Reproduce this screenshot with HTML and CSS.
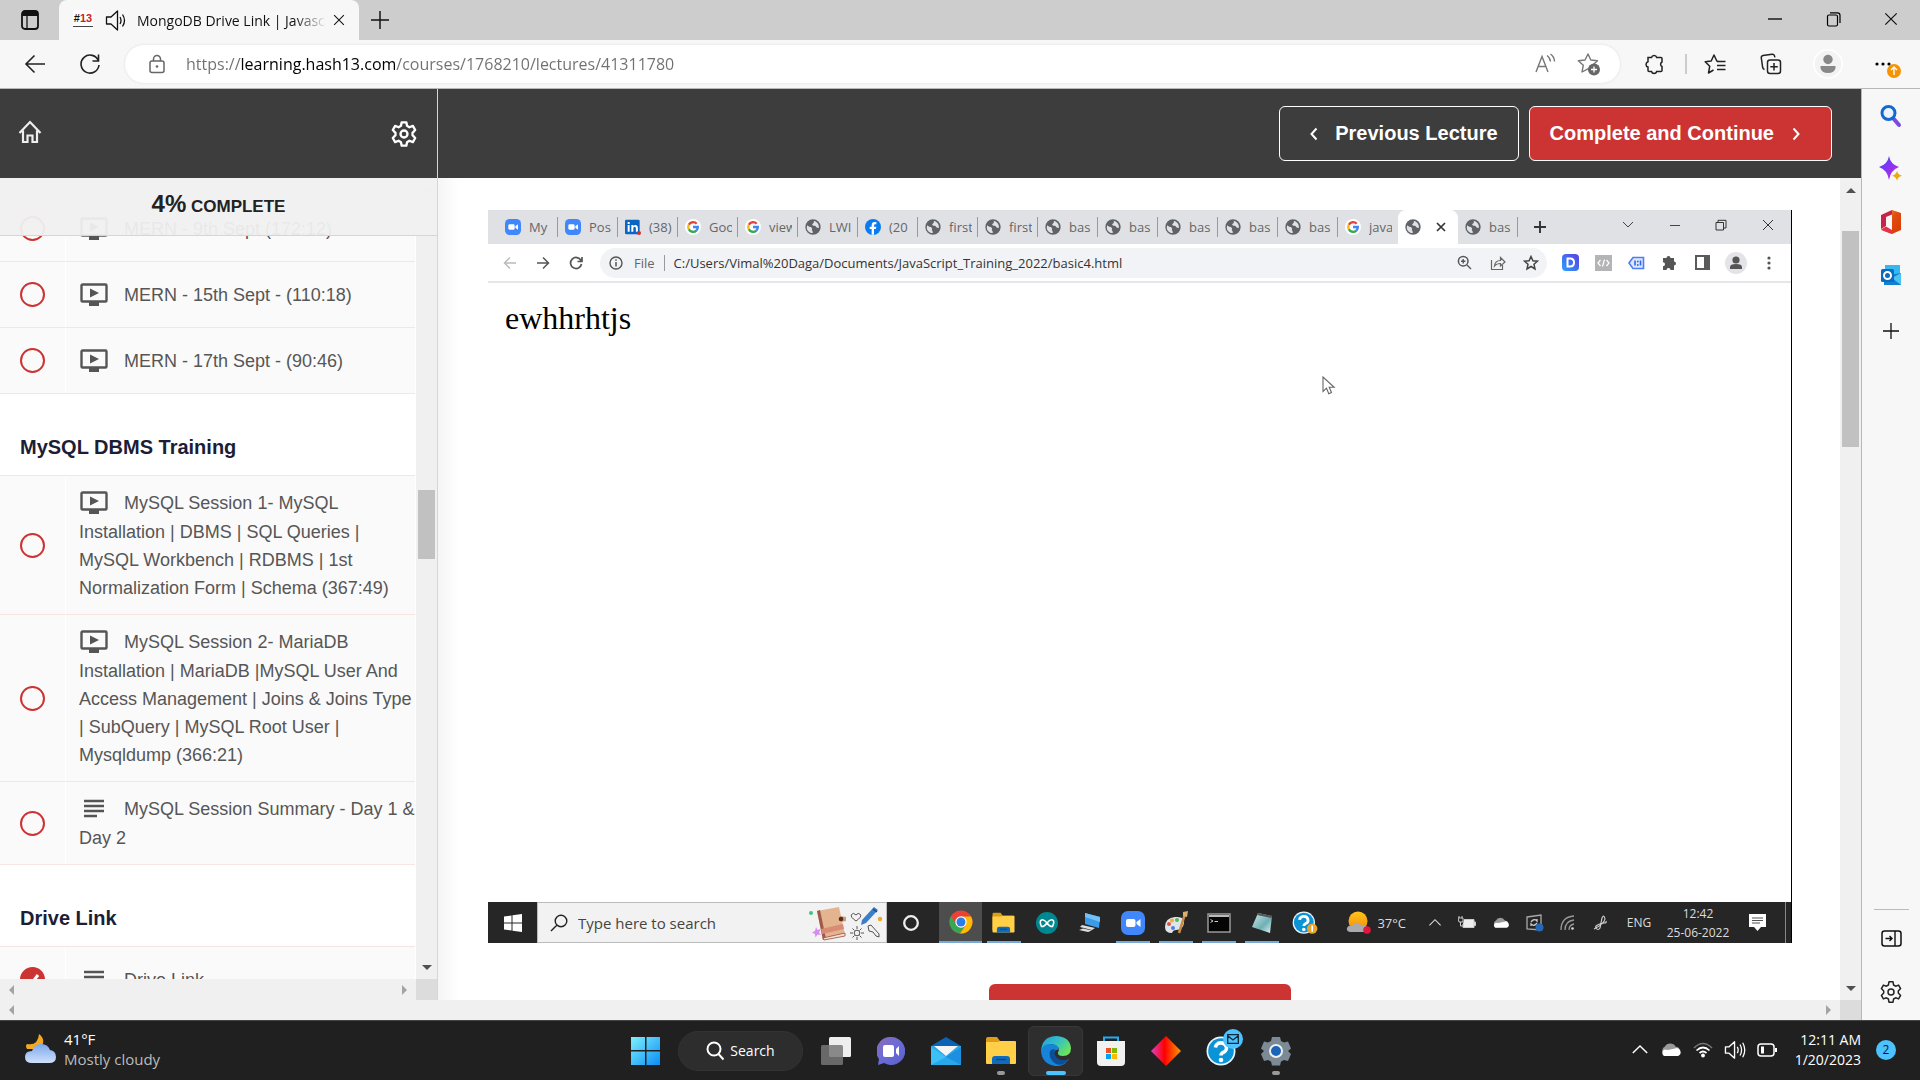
FILE: index.html
```html
<!DOCTYPE html>
<html lang="en">
<head>
<meta charset="utf-8">
<title>MongoDB Drive Link | Javascript</title>
<link rel="stylesheet" href="styles.css">
</head>
<body>
<svg class="defs" width="0" height="0" aria-hidden="true">
  <defs>
    <linearGradient id="g-win" x1="0" y1="0" x2="1" y2="1"><stop offset="0" stop-color="#7ef0ff"/><stop offset="1" stop-color="#0a8df5"/></linearGradient>
    <linearGradient id="g-chat" x1="0" y1="0" x2="1" y2="1"><stop offset="0" stop-color="#8f6bb5"/><stop offset=".5" stop-color="#6a6bd8"/><stop offset="1" stop-color="#5b5fc7"/></linearGradient>
    <linearGradient id="g-edge" x1="0" y1="0" x2="1" y2=".6"><stop offset="0" stop-color="#1f9de0"/><stop offset=".55" stop-color="#35c1c4"/><stop offset="1" stop-color="#6be35a"/></linearGradient>
    <linearGradient id="g-dia" x1="0" x2="1"><stop offset="0" stop-color="#e040c8"/><stop offset=".45" stop-color="#f00"/><stop offset="1" stop-color="#ff9a00"/></linearGradient>
    <linearGradient id="g-star" x1="0" y1="0" x2="1" y2="1"><stop offset="0" stop-color="#3d4cf5"/><stop offset=".6" stop-color="#9a2ff0"/><stop offset="1" stop-color="#c44bf5"/></linearGradient>
    <linearGradient id="g-off" x1="0" y1="0" x2="1" y2="1"><stop offset="0" stop-color="#f2a00f"/><stop offset=".5" stop-color="#e04a10"/><stop offset="1" stop-color="#d83b01"/></linearGradient>
    <linearGradient id="g-sun" x1="0" y1="0" x2="0" y2="1"><stop offset="0" stop-color="#ffc61a"/><stop offset="1" stop-color="#f58a07"/></linearGradient>
    <linearGradient id="g-cloud" x1="0" y1="0" x2="0" y2="1"><stop offset="0" stop-color="#7ba7ec"/><stop offset="1" stop-color="#cfe0fa"/></linearGradient>
    <linearGradient id="g-d" x1="0" y1="1" x2="1" y2="0"><stop offset="0" stop-color="#2aa0ff"/><stop offset="1" stop-color="#5a3de0"/></linearGradient>
    <linearGradient id="g-note" x1="0" y1="0" x2="1" y2="1"><stop offset="0" stop-color="#cfe9ea"/><stop offset=".6" stop-color="#6fb0b5"/><stop offset="1" stop-color="#e6f4f4"/></linearGradient>
  </defs>
  <symbol id="zoomcam" viewBox="0 0 24 24"><rect width="24" height="24" rx="7" fill="#4087fc"/><rect x="5" y="8" width="9.500" height="8" rx="2" fill="#fff"/><path d="M15.500 11l4-3v8l-4-3z" fill="#fff"/></symbol>
  <symbol id="google" viewBox="0 0 24 24"><circle cx="12" cy="12" r="12" fill="#fff"/><g fill="none" stroke-width="3.600"><path d="M17.500 7.200A7.200 7.200 0 0 0 5.700 8.600" stroke="#ea4335"/><path d="M5.700 8.600a7.200 7.200 0 0 0 0 6.800" stroke="#fbbc05"/><path d="M5.700 15.400a7.200 7.200 0 0 0 11.300 2" stroke="#34a853"/><path d="M17 17.400a7.200 7.200 0 0 0 2.200-5.300H12" stroke="#4285f4"/></g></symbol>
  <symbol id="globe" viewBox="0 0 24 24"><circle cx="12" cy="12" r="11.500" fill="#5f6368"/><path d="M3.500 9.500c2 3 4.500 1.500 6.500 3.500s-1 3 1 4.500c1 1 0 2.500 1 3.500-4.500.5-9-3-9.300-8 .1-1.300.3-2.500.8-3.500zM13.500 3c-1 1.500.5 2-1 3.500S10 8 11.500 9.500s3 0 4.500 1.500 1 2.500 4.800 2.500C21.500 8.500 18.500 4 13.500 3z" fill="#dfe1e5"/></symbol>
  <symbol id="tv" viewBox="0 0 28 24"><path d="M2.500 1.500h23a1 1 0 0 1 1 1v15a1 1 0 0 1-1 1h-23a1 1 0 0 1-1-1v-15a1 1 0 0 1 1-1z" fill="none" stroke="#555" stroke-width="2.400"/><path d="M9 19h10v4H9z" fill="#555"/><path d="M10 5.500v9l9-4.500z" fill="#555"/></symbol>
  <symbol id="lines" viewBox="0 0 28 24"><path d="M4 4h20M4 9h20M4 14h20M4 19h13" stroke="#555" stroke-width="2.400"/></symbol>
  <symbol id="gear" viewBox="0 0 24 24"><path d="M10 2h4l.6 3 2 1.200 3-1.100 2 3.500L19.300 11v2l2.300 2.400-2 3.500-3-1.100-2 1.200-.6 3h-4l-.6-3-2-1.200-3 1.100-2-3.500L4.700 13v-2L2.400 8.600l2-3.500 3 1.100 2-1.200z" fill="none" stroke="currentColor" stroke-width="2" stroke-linejoin="round"/><circle cx="12" cy="12" r="3" fill="none" stroke="currentColor" stroke-width="2"/></symbol>
  <symbol id="gearthin" viewBox="0 0 24 24"><path d="M10 1.800h4l.6 3.200 2 1.200 3-1.100 2 3.500L19.300 11v2l2.300 2.400-2 3.500-3-1.100-2 1.200-.6 3.200h-4L9.400 19l-2-1.200-3 1.100-2-3.500L4.700 13v-2L2.400 8.600l2-3.500 3 1.100 2-1.200z" fill="none" stroke="#222" stroke-width="1.500" stroke-linejoin="round"/><circle cx="12" cy="12" r="3" fill="none" stroke="#222" stroke-width="1.500"/></symbol>
  <symbol id="folder" viewBox="0 0 30 30"><path d="M0 3q0-2 2-2h9l3 4h15v20H0z" fill="#e09c12"/><path d="M0 6h12l2-1h15q1 0 1 1v21q0 1-1 1H1q-1 0-1-1z" fill="#ffcf48"/><path d="M6 28v-5q0-3 3-3h12q3 0 3 3v5z" fill="#0f6cbd"/><path d="M10 23.500h10" stroke="#0a4a86" stroke-width="1.500"/></symbol>
  <symbol id="cloud" viewBox="0 0 28 20"><path d="M7 17a6 6 0 0 1-1-11A8 8 0 0 1 20 6a5.500 5.500 0 0 1 3 10z" fill="#9a9a9a"/><path d="M5 17.500a4.500 4.500 0 0 1 1-8l4 .5 9-2a5 5 0 0 1 4 9.500z" fill="#fff"/></symbol>
  <symbol id="help" viewBox="0 0 30 30"><circle cx="15" cy="15" r="14.500" fill="#eaf6fd"/><circle cx="15" cy="15" r="12.800" fill="#0a93d6"/><path d="M9.500 11.500a5.500 5 0 1 1 7.500 5q-2 1-2 3" fill="none" stroke="#fff" stroke-width="3.600"/><circle cx="15" cy="24" r="2.300" fill="#fff"/></symbol>
  <symbol id="chev" viewBox="0 0 20 12"><path d="M2 10l8-8 8 8" fill="none" stroke="currentColor" stroke-width="1.600"/></symbol>
  <symbol id="x" viewBox="0 0 16 16"><path d="M1.500 1.500l13 13M14.500 1.500l-13 13" stroke="currentColor" stroke-width="1.400"/></symbol>
  <symbol id="plus" viewBox="0 0 16 16"><path d="M8 0v16M0 8h16" stroke="currentColor" stroke-width="1.300"/></symbol>
  <symbol id="speaker" viewBox="0 0 24 22"><path d="M1.500 7.500h4l6-5.500v18l-6-5.500h-4z" fill="none" stroke="currentColor" stroke-width="1.500" stroke-linejoin="round"/><path d="M14.500 7.500q2 3.500 0 7M17.500 5q3.500 6 0 12M20.500 3q4.500 8 0 16" fill="none" stroke="currentColor" stroke-width="1.400"/></symbol>
</svg>

<header class="tabstrip">
  <button class="slot w58" aria-label="Tab actions"><svg width="20" height="20" viewBox="0 0 20 20"><rect x="2" y="1" width="16" height="18" rx="3" fill="none" stroke="#111" stroke-width="1.800"/><path d="M2 4q0-3 3-3h10q3 0 3 3v2H2z" fill="#111"/><path d="M7 6v13" stroke="#111" stroke-width="1.300"/></svg></button>
  <div class="browser-tab">
    <span class="favicon">#<b>13</b><i></i></span>
    <svg class="audio" width="21" height="21" viewBox="0 0 21 21"><path d="M1.500 7h4.500l6.500-6v19L6 14H1.500z" fill="none" stroke="#111" stroke-width="1.300" stroke-linejoin="round"/><path d="M15 7q2 3.500 0 7M17.500 4.500q4 6 0 12" fill="none" stroke="#111" stroke-width="1.300"/></svg>
    <span class="tab-title">MongoDB Drive Link | Javasc</span>
    <button aria-label="Close tab"><svg width="12" height="12"><use href="#x"/></svg></button>
  </div>
  <button class="slot w42" aria-label="New tab"><svg width="18" height="18"><use href="#plus"/></svg></button>
  <div class="window-buttons">
    <button class="slot w58" aria-label="Minimize"><svg width="14" height="14"><path d="M0 7h14" stroke="#000" stroke-width="1.300"/></svg></button>
    <button class="slot w58" aria-label="Restore"><svg width="15" height="15"><path d="M1.500 4.500q0-1.500 1.500-1.500h7q1.500 0 1.500 1.500v8q0 1.500-1.500 1.500H3q-1.500 0-1.500-1.500zM4 .8h7.500q2.500 0 2.500 2.500V11" fill="none" stroke="#000" stroke-width="1.200"/></svg></button>
    <button class="slot w58" aria-label="Close"><svg width="14" height="14"><use href="#x"/></svg></button>
  </div>
</header>

<nav class="toolbar">
  <button class="slot w54" aria-label="Back"><svg width="22" height="20"><path d="M21 10H2M10.500 1.500L2 10l8.500 8.500" fill="none" stroke="#222" stroke-width="1.600"/></svg></button>
  <button class="slot w56" aria-label="Refresh"><svg width="22" height="22"><path d="M19.500 8A9 9 0 1 0 20 12M19.500 1.500V8H13.500" fill="none" stroke="#222" stroke-width="1.600"/></svg></button>
  <div class="address">
    <svg width="18" height="20"><rect x="2" y="7" width="14" height="11.500" rx="2" fill="none" stroke="#666" stroke-width="1.500"/><path d="M5.500 7V5a3.500 3.500 0 0 1 7 0v2" fill="none" stroke="#666" stroke-width="1.500"/><circle cx="9" cy="12.500" r="1.300" fill="#666"/></svg>
    <input type="text" aria-label="Address" value="https://learning.hash13.com/courses/1768210/lectures/41311780">
    <button class="slot w44" aria-label="Read aloud"><svg width="22" height="22"><path d="M2 19L8 3.500 14 19M4 13.500h8M13 2.500q3 2 3.500 6M16.500 1q4 3 4 7.500" fill="none" stroke="#777" stroke-width="1.400"/></svg></button>
    <button class="slot w44" aria-label="Add to favorites"><svg width="24" height="24"><path d="M11 2l2.800 6 6.700.8-5 4.500L16.700 20 11 16.800 5 20l1.300-6.700-5-4.500L8 8z" fill="none" stroke="#777" stroke-width="1.400" stroke-linejoin="round"/><circle cx="17" cy="17.500" r="6" fill="#666"/><path d="M17 14.500v6M14 17.500h6" stroke="#fff" stroke-width="1.300"/></svg></button>
  </div>
  <button class="slot w58 extensions" aria-label="Extensions"><svg width="22" height="22" viewBox="0 0 22 22"><path d="M5 4.500h3.500a2.700 2.700 0 0 1 5.200 0h4.300q1 0 1 1V9a2.500 2.500 0 0 0 0 4.500v4q0 1-1 1h-4.300a2.700 2.700 0 0 1-5.200 0H6q-1 0-1-1v-3.500a2.700 2.700 0 0 1 0-5.200z" fill="none" stroke="#222" stroke-width="1.500"/></svg></button>
  <span class="tool-sep"></span>
  <button class="slot w56" aria-label="Favorites"><svg width="22" height="22"><path d="M14.500 8.500L12.800 8 10 2 7.200 8l-6 .8 4.500 4.500L4.500 20l5-3M13 8.500h8.500M13 12.500h8.500M13 16.500h8.500" fill="none" stroke="#222" stroke-width="1.500" stroke-linejoin="round"/></svg></button>
  <button class="slot w56" aria-label="Collections"><svg width="22" height="22"><rect x="7.500" y="7" width="13" height="13.500" rx="2.500" fill="none" stroke="#222" stroke-width="1.500"/><path d="M14 10v7.500M10.300 13.800h7.500M4.500 16.500Q3 16 2.700 14.500L1.300 5q-.3-2 1.700-2.500L12 1.200q2-.2 2.500 1.700l.4 1.500" fill="none" stroke="#222" stroke-width="1.500"/></svg></button>
  <button class="slot w58" aria-label="Profile"><svg width="30" height="30"><circle cx="15" cy="15" r="14" fill="#f3f3f3" stroke="#fff" stroke-width="1.500"/><circle cx="15" cy="10.500" r="4.700" fill="#888"/><path d="M7.500 17h15v2q-1 5-7.500 5t-7.500-5z" fill="#888"/></svg></button>
  <button class="slot w58" aria-label="Settings and more"><svg width="30" height="30"><circle cx="6" cy="15" r="1.600"/><circle cx="12" cy="15" r="1.600"/><circle cx="18" cy="15" r="1.600"/><circle cx="23" cy="22" r="7" fill="#f59300"/><path d="M23 26v-8M20 21l3-3 3 3" fill="none" stroke="#fff" stroke-width="1.400"/></svg></button>
</nav>

<div class="middle">
  <div class="page">
    <header class="course-bar">
      <div class="course-bar-left">
        <a href="#home" aria-label="Home"><svg width="26" height="26"><path d="M2.500 14L13 3l10.500 11M6 11.500V23h4.500v-6.500h5V23H20V11.500" fill="none" stroke="#eee" stroke-width="2.200"/></svg></a>
        <button aria-label="Settings"><svg width="28" height="28"><use href="#gear"/></svg></button>
      </div>
      <div class="course-nav">
        <button class="btn prev"><svg width="8" height="14"><path d="M6.500 1.500L1.500 7l5 5.500" fill="none" stroke="#fff" stroke-width="2"/></svg>Previous Lecture</button>
        <button class="btn next">Complete and Continue<svg width="8" height="14"><path d="M1.500 1.500l5 5.500-5 5.500" fill="none" stroke="#fff" stroke-width="2"/></svg></button>
      </div>
    </header>

    <div class="cols">
      <aside class="sidebar">
        <div class="progress"><b>4%</b> COMPLETE</div>
        <div class="sidebar-scroll">
          <div class="lectures">
            <a class="row" href="#l1"><span class="mark"><i></i></span><span class="label"><svg><use href="#tv"/></svg>MERN - 9th Sept (172:12)</span></a>
            <a class="row" href="#l2"><span class="mark"><i></i></span><span class="label"><svg><use href="#tv"/></svg>MERN - 15th Sept - (110:18)</span></a>
            <a class="row" href="#l3"><span class="mark"><i></i></span><span class="label"><svg><use href="#tv"/></svg>MERN - 17th Sept - (90:46)</span></a>
            <h2>MySQL DBMS Training</h2>
            <a class="row" href="#l4"><span class="mark"><i></i></span><span class="label"><svg><use href="#tv"/></svg>MySQL Session 1- MySQL<br>Installation | DBMS | SQL Queries |<br>MySQL Workbench | RDBMS | 1st<br>Normalization Form | Schema (367:49)</span></a>
            <a class="row" href="#l5"><span class="mark"><i></i></span><span class="label"><svg><use href="#tv"/></svg>MySQL Session 2- MariaDB<br>Installation | MariaDB |MySQL User And<br>Access Management | Joins &amp; Joins Type<br>| SubQuery | MySQL Root User |<br>Mysqldump (366:21)</span></a>
            <a class="row" href="#l6"><span class="mark"><i></i></span><span class="label"><svg><use href="#lines"/></svg>MySQL Session Summary - Day 1 &amp;<br>Day 2</span></a>
            <h2>Drive Link</h2>
            <a class="row" href="#l7"><span class="mark"><i class="done"><svg width="25" height="25"><path d="M7 13l4 4 7-9" fill="none" stroke="#fff" stroke-width="3"/></svg></i></span><span class="label"><svg><use href="#lines"/></svg>Drive Link</span></a>
          </div>
          <div class="vbar side"><span class="arrow up pale"></span><span class="thumb"></span><span class="arrow down"></span></div>
        </div>
        <div class="hbar"><div class="track"><span class="arrow left"></span><span class="arrow right"></span></div><span class="corner"></span></div>
      </aside>

      <main class="content">
        <section class="video" aria-label="Lecture video">
          <div class="v-tabs">
            <span class="v-tab"><svg><use href="#zoomcam"/></svg><em>My</em></span>
            <span class="v-tab"><svg><use href="#zoomcam"/></svg><em>Pos</em></span>
            <span class="v-tab"><svg viewBox="0 0 24 24"><rect y="1" width="22" height="22" rx="2" fill="#0a66c2"/><path d="M4 9h3v10H4zM4 4.500h3v3H4zM9.500 9h3v1.500q3-3 6 0 .8 1 .8 3V19h-3v-5q0-2.500-1.800-2.500-2 0-2 2.500v5h-3z" fill="#fff"/><circle cx="21" cy="21" r="3" fill="#e02b2b"/></svg><em>(38)</em></span>
            <span class="v-tab"><svg><use href="#google"/></svg><em>Goo</em></span>
            <span class="v-tab"><svg><use href="#google"/></svg><em>view</em></span>
            <span class="v-tab"><svg><use href="#globe"/></svg><em>LWI</em></span>
            <span class="v-tab"><svg viewBox="0 0 24 24"><circle cx="12" cy="12" r="12" fill="#0b7bf0"/><path d="M10 23.500V15H7v-3.500h3V9q0-4.500 4.500-4.500H17V8h-1.500q-2 0-2 1.800v1.700H17l-.6 3.500h-2.900v8.500z" fill="#fff"/></svg><em>(20</em></span>
            <span class="v-tab"><svg><use href="#globe"/></svg><em>first</em></span>
            <span class="v-tab"><svg><use href="#globe"/></svg><em>first</em></span>
            <span class="v-tab"><svg><use href="#globe"/></svg><em>bas</em></span>
            <span class="v-tab"><svg><use href="#globe"/></svg><em>bas</em></span>
            <span class="v-tab"><svg><use href="#globe"/></svg><em>bas</em></span>
            <span class="v-tab"><svg><use href="#globe"/></svg><em>bas</em></span>
            <span class="v-tab"><svg><use href="#globe"/></svg><em>bas</em></span>
            <span class="v-tab last"><svg><use href="#google"/></svg><em>java</em></span>
            <span class="v-tab active"><svg><use href="#globe"/></svg><svg class="close" viewBox="0 0 10 10"><path d="M1 1l8 8M9 1L1 9" stroke="#333" stroke-width="1.700"/></svg></span>
            <span class="v-tab"><svg><use href="#globe"/></svg><em>bas</em></span>
            <span class="slot w44"><svg width="12" height="12" viewBox="0 0 12 12"><path d="M6 0v12M0 6h12" stroke="#333" stroke-width="1.900"/></svg></span>
            <span class="v-window">
              <svg width="12" height="12"><path d="M1 3l5 5 5-5" fill="none" stroke="#444"/></svg>
              <svg width="12" height="12"><path d="M1 6.500h10" stroke="#444"/></svg>
              <svg width="12" height="12"><path d="M1 3.500h7.500v7.500H1zM3 3.500V1.300h8V9H8.500" fill="none" stroke="#333"/></svg>
              <svg width="12" height="12"><path d="M1 1l10 10M11 1L1 11" stroke="#333"/></svg>
            </span>
          </div>
          <div class="v-toolbar">
            <span class="slot w33"><svg width="14" height="14"><path d="M13 7H2M7 1.500L1.500 7 7 12.500" fill="none" stroke="#bbb" stroke-width="1.500"/></svg></span>
            <span class="slot w33"><svg width="14" height="14"><path d="M1 7h11M7 1.500L12.500 7 7 12.500" fill="none" stroke="#555" stroke-width="1.500"/></svg></span>
            <span class="slot w33"><svg width="14" height="14"><path d="M12 4.500A5.500 5.500 0 1 0 12.500 8M13 1v4.500H8.500" fill="none" stroke="#555" stroke-width="1.700"/></svg></span>
            <div class="v-omnibox">
              <svg width="14" height="14"><circle cx="7" cy="7" r="6" fill="none" stroke="#555" stroke-width="1.400"/><path d="M7 6v4.500M7 3.300v1.500" stroke="#555" stroke-width="1.500"/></svg>
              <span class="v-file">File</span>
              <span class="v-url">C:/Users/Vimal%20Daga/Documents/JavaScript_Training_2022/basic4.html</span>
              <span class="slot w33"><svg width="15" height="15"><circle cx="6.200" cy="6.200" r="4.800" fill="none" stroke="#555" stroke-width="1.500"/><path d="M10 10l4 4M4 6.200h4.400M6.200 4v4.400" stroke="#555" stroke-width="1.400"/></svg></span>
              <span class="slot w33"><svg width="16" height="16"><path d="M1.500 5v9.500h11V10M4.500 11q.5-5.500 6-5.500V2.500L15 7l-4.500 4V8.500q-4 0-6 2.500z" fill="none" stroke="#666" stroke-width="1.200"/></svg></span>
              <span class="slot w33"><svg width="16" height="16"><path d="M8 1.500l1.900 4.300 4.600.4-3.500 3.100 1 4.700-4-2.500L4 14l1-4.700-3.500-3.100 4.600-.4z" fill="none" stroke="#444" stroke-width="1.500"/></svg></span>
            </div>
            <span class="slot w33"><svg width="17" height="17" viewBox="0 0 17 17"><rect width="17" height="17" rx="4" fill="url(#g-d)"/><path d="M5.500 4.500H8q4 0 4 4t-4 4H5.500z" fill="none" stroke="#fff" stroke-width="2"/></svg></span>
            <span class="slot w33"><svg width="17" height="17"><rect y="1" width="17" height="16" fill="#b4b4b6"/><path d="M5.500 6L3 9l2.500 3M11.500 6L14 9l-2.500 3M9.500 5.500l-2 7" fill="none" stroke="#fff" stroke-width="1.200"/></svg></span>
            <span class="slot w33"><svg width="17" height="14"><path d="M1 7l4-5.500h10.500v11H5z" fill="#dfe8fd" stroke="#4b7df5" stroke-width="1.600"/><path d="M7 4.500v5M12.500 4.500v5" stroke="#2f66ee" stroke-width="1.600"/><circle cx="9.800" cy="5.500" r=".9" fill="#2f66ee"/><circle cx="9.800" cy="9" r=".9" fill="#2f66ee"/></svg></span>
            <span class="slot w33"><svg width="15" height="15" viewBox="0 0 15 15"><path d="M1 3h3.500a2 2 0 1 1 4 0H12v3.500a2 2 0 1 1 0 4V15H8.500a2 2 0 0 0-4 0H1v-3.800a2 2 0 0 0 0-4z" fill="#555"/></svg></span>
            <span class="slot w33"><svg width="15" height="15"><rect x="1" y="1" width="13" height="13" fill="#fff" stroke="#5a5a5a" stroke-width="2"/><path d="M9 1h5v13H9z" fill="#5a5a5a"/></svg></span>
            <span class="slot w33"><svg width="22" height="22"><circle cx="11" cy="11" r="11" fill="#e3e3e8"/><circle cx="11" cy="8" r="3.600" fill="#555"/><path d="M5 17v-2q0-3 6-3t6 3v2z" fill="#555"/></svg></span>
            <span class="slot w33"><svg width="4" height="14" fill="#555"><circle cx="2" cy="2" r="1.600"/><circle cx="2" cy="7" r="1.600"/><circle cx="2" cy="12" r="1.600"/></svg></span>
          </div>
          <div class="v-page"><p>ewhhrhtjs</p>
            <svg class="cursor" width="14" height="20"><path d="M1 1v14.500l3.500-3.300 2.300 5.500 2.700-1.200-2.300-5.200h5z" fill="#fff" stroke="#666" stroke-width="1.100"/></svg>
          </div>
          <div class="v-taskbar">
            <span class="slot w49"><svg width="18" height="18" fill="#fff"><path d="M0 2.500l7.500-1v7H0zM8.500 1.300L18 0v8.500H8.500zM0 9.500h7.500v7l-7.500-1zM8.500 9.500H18V18l-9.500-1.300z"/></svg></span>
            <label class="v-search">
              <svg width="18" height="18"><circle cx="11" cy="7" r="5.800" fill="none" stroke="#222" stroke-width="1.400"/><path d="M6.800 11.200L1 17" stroke="#222" stroke-width="1.400"/></svg>
              <input type="text" placeholder="Type here to search" aria-label="Type here to search">
              <svg width="76" height="36" viewBox="0 0 76 36"><path d="M10 6l22-4 6 28-22 5z" fill="#e3b48f"/><path d="M10 6l3-1 6 29-3 1z" fill="#a05a48"/><path d="M14 24l22-5 1 5-22 5z" fill="#d98b74"/><path d="M16 33l22-5v3l-21 4z" fill="#f6e4d8" stroke="#9c4a3c" stroke-width=".8"/><path d="M33 11l6 1v4l-5 1z" fill="#d09a78"/><circle cx="34" cy="14" r="2.300" fill="#5a2f20"/><circle cx="4" cy="8" r="2" fill="#3fc386"/><path d="M9 22l1.500 3 3.500-1-2 3.500 2 2.500-3.500-.5-2 3-.5-3.500-3-1.500 3-1.500z" fill="#d98af0"/><path d="M49 16q-6-4-4.500-6.500 2-2.500 4.500.5 2-3 4.500-.5Q55 12 49 16z" fill="none" stroke="#555" stroke-width="1"/><path d="M55 15L67 2l4 3-12 13-5 2z" fill="#3b7fc9"/><path d="M66 4l4 3" stroke="#184a86" stroke-width="1.500"/><circle cx="73" cy="14" r="2.200" fill="#f5a623"/><g stroke="#555" fill="none"><circle cx="50" cy="28" r="2.800"/><path d="M50 21v3M50 32v3M43 28h3M54 28h3M45.500 23.500l2 2M54.500 32.500l-2-2M54.500 23.500l-2 2M45.500 32.500l2-2"/><path d="M61 21l3-1 8 9v3l-3-1-3-4-4-1z"/></g></svg>
            </label>
            <span class="slot w48"><svg width="18" height="18"><circle cx="9" cy="9" r="6.800" fill="none" stroke="#eee" stroke-width="2.300"/></svg></span>
            <span class="v-app current run"><svg width="24" height="24" viewBox="0 0 24 24"><circle cx="12" cy="12" r="11.500" fill="#ea4335"/><path d="M2 6.300A11.500 11.500 0 0 0 11 23.500L16 15l-8.500 0z" fill="#34a853"/><path d="M22 6.500H12l5 8-6 9A11.500 11.500 0 0 0 22 6.500z" fill="#fbbc05"/><circle cx="12" cy="12" r="5.700" fill="#fff"/><circle cx="12" cy="12" r="4.500" fill="#2b7de9"/></svg></span>
            <span class="v-app run"><svg width="23" height="22"><use href="#folder"/></svg></span>
            <span class="v-app"><svg width="22" height="22"><circle cx="11" cy="11" r="11" fill="#00878f"/><path d="M11 11q-3-4-5.500-3t0 6.500Q8 15 11 11t5.500-3 0 6.500Q14 15 11 11z" fill="none" stroke="#fff" stroke-width="1.600"/></svg></span>
            <span class="v-app"><svg width="24" height="22"><path d="M7 1l15 4-1 11L7 12z" fill="#3c9be8"/><path d="M7 1l15 4v5L7 5z" fill="#72c0f7"/><path d="M4 13l13 3-3 2-12-3zM1 18l9 2 4-1.500-9-2z" fill="#ddd"/></svg></span>
            <span class="v-app run"><svg width="24" height="24"><use href="#zoomcam"/></svg></span>
            <span class="v-app run"><svg width="25" height="24"><path d="M12 6q10-1 9 6t-8 7q-3 0-4 3-7 0-7-6 0-9 10-10z" fill="#dfe5ec"/><circle cx="6" cy="13" r="2" fill="#e0524a"/><circle cx="9" cy="9.500" r="2" fill="#eeb32f"/><circle cx="14" cy="9" r="2" fill="#58b65a"/><circle cx="10" cy="17" r="2" fill="#4a86d8"/><path d="M22 3L16 22" stroke="#c98a45" stroke-width="2.500"/><path d="M20 1l5-1-1 6-4-1z" fill="#d8b070"/></svg></span>
            <span class="v-app run"><svg width="24" height="20"><rect x="1" y="1" width="22" height="18" fill="#050505" stroke="#999" stroke-width="1.500"/><path d="M2 2h20v2H2z" fill="#bbb"/><path d="M3.500 6.500L6 8l-2.500 1.500M7.500 8.500H11" stroke="#ccc" fill="none"/></svg></span>
            <span class="v-app run"><svg width="22" height="22"><path d="M7 1l14 3-2 17L1 15z" fill="url(#g-note)"/><path d="M7 1l14 3-.5 2L6 3z" fill="#555"/></svg></span>
            <span class="v-app"><svg width="26" height="24" viewBox="0 0 32 30"><use href="#help" width="29" height="29"/><circle cx="25" cy="22" r="6.500" fill="#e8a52c"/><path d="M25 18v8" stroke="#fff" stroke-width="2"/></svg></span>
            <span class="v-weather"><svg width="26" height="24"><circle cx="13" cy="10" r="9.500" fill="url(#g-sun)"/><path d="M5 21q-4-1-3-4t5-2q4-6 9-1 6-1 6 4 0 3-3 3z" fill="#aaa9ad"/><circle cx="22" cy="19" r="3.800" fill="#e3173e"/></svg>37°C</span>
            <span class="v-tray">
              <svg width="14" height="9"><use href="#chev"/></svg>
              <svg width="18" height="14"><path d="M6 3.500h10v8H5V8M16 6h1.500v3.500H16" fill="#eee" stroke="#ccc"/><path d="M0 2h5v4H1zM1 0v2M4 0v2M2.500 6v4h3" fill="none" stroke="#ccc"/></svg>
              <svg width="18" height="14"><use href="#cloud"/></svg>
              <svg width="18" height="18"><path d="M1 3l14-2v15L1 15z" fill="none" stroke="#aaa" stroke-width="1.300"/><path d="M5 8q3-4 6-1V5M11 9q-3 4-6 1v2" fill="none" stroke="#ccc" stroke-width="1.300"/><circle cx="13.500" cy="13.500" r="4" fill="#2468b8"/></svg>
              <svg width="16" height="16"><path d="M1 15Q1 2 14 1M5 15q0-9 9-10M9 15q0-5 5-6" fill="none" stroke="#999" stroke-width="1.300"/><circle cx="12.500" cy="13.500" r="1.300" fill="#ddd"/></svg>
              <svg width="16" height="16"><path d="M2 14Q12 9 13 4q-1-5-3-1L8 13q-2 3-4 0t8-5q3 0 2-2" fill="none" stroke="#ccc" stroke-width="1.200"/></svg>
            </span>
            <span class="v-lang">ENG</span>
            <span class="v-clock">12:42<br>25-06-2022</span>
            <span class="slot w48"><svg width="18" height="18"><path d="M0 0h17v13h-5l-3.500 4L5 13H0z" fill="#fff"/><path d="M3 4h11M3 6.500h11M3 9h8" stroke="#555" stroke-width="1.200"/></svg></span>
            <span class="v-desk"></span>
          </div>
        </section>
        <button class="big-button" aria-label="Complete and continue to next lecture"></button>
      </main>
      <div class="vbar page-scroll"><span class="arrow up"></span><span class="thumb"></span><span class="arrow down"></span></div>
    </div>
    <div class="hbar"><div class="track"><span class="arrow left"></span><span class="arrow right"></span></div><span class="corner"></span></div>
  </div>

  <aside class="edge-bar">
    <button aria-label="Search"><svg width="24" height="24"><path d="M14 14l6 7" stroke="#7a4bdc" stroke-width="4" stroke-linecap="round"/><circle cx="9.500" cy="9" r="6.500" fill="#eaf4ff" stroke="#1469cf" stroke-width="3"/></svg></button>
    <button aria-label="Discover"><svg width="24" height="26"><path d="M10 0q1.500 8.500 10 11Q11.500 14 10 24 8.500 14 0 11 8.500 8.500 10 0z" fill="url(#g-star)"/><path d="M18 15q.8 3.500 5 4.700-4.200 1-5 5-.8-4-5-5 4.200-1.200 5-4.700z" fill="#e8ab14"/></svg></button>
    <button aria-label="Office"><svg width="22" height="26"><path d="M12 1l9 3v17l-9 4-11-4 11 .5V5.500z" fill="url(#g-off)"/><path d="M1 6l11-5v4.500L6 8v9l-5 3z" fill="#c8244a"/><path d="M1 20.500l5-3 6 3.500v4z" fill="#e8304c"/></svg></button>
    <button aria-label="Outlook"><svg width="22" height="22"><rect x="5" y="1" width="15" height="12" fill="#35b8f1"/><path d="M4 12l17-3v12H4z" fill="#1180d0"/><path d="M12 14l9-5v12z" fill="#4ac4f5"/><rect x="1" y="5" width="13" height="13" rx="1.500" fill="#0a6cc0"/><circle cx="7.500" cy="11.500" r="3.500" fill="none" stroke="#fff" stroke-width="2"/></svg></button>
    <button class="add" aria-label="Customize"><svg width="16" height="16"><use href="#plus"/></svg></button>
    <hr>
    <button aria-label="Hide sidebar"><svg width="21" height="17"><rect x="1" y="1" width="19" height="15" rx="2.500" fill="none" stroke="#111" stroke-width="1.500"/><path d="M14 1v15M4.500 8.500H11M8.500 6L11 8.500 8.500 11" fill="none" stroke="#111" stroke-width="1.400"/></svg></button>
    <button aria-label="Sidebar settings"><svg width="24" height="24"><use href="#gearthin"/></svg></button>
  </aside>
</div>

<footer class="taskbar">
  <div class="weather">
    <svg width="32" height="32"><path d="M15 1q8 6 1 15H3q-2-3 0-5 11 2 12-10z" fill="#f2a91d"/><path d="M8 30q-7 0-7-6t7-6q2-7 9-7t9 6q6 1 6 7t-7 6z" fill="url(#g-cloud)"/></svg>
    <p>41°F<br><span>Mostly cloudy</span></p>
  </div>
  <div class="apps">
    <button class="slot w58" aria-label="Start"><svg width="30" height="30"><path d="M0 1h14v13H0zM15.500 1H29v13H15.500zM0 15.500h14V29H0zM15.500 15.500H29V29H15.500z" fill="url(#g-win)"/></svg></button>
    <button class="search-pill"><svg width="18" height="20"><circle cx="8" cy="8" r="6.500" fill="none" stroke="#fff" stroke-width="2"/><path d="M12.500 13l5 5.500" stroke="#fff" stroke-width="2"/></svg>Search</button>
    <button class="app" aria-label="Task view"><svg width="30" height="28"><rect x="8" y="0" width="22" height="20" rx="1.500" fill="#eee"/><rect x="0" y="8" width="22" height="20" rx="1.500" fill="#777" fill-opacity=".85"/></svg></button>
    <button class="app" aria-label="Chat"><svg width="28" height="28"><path d="M14 0a14 14 0 1 1-7 26L1 28l1-6A14 14 0 0 1 14 0z" fill="url(#g-chat)"/><rect x="6" y="8" width="11" height="12" rx="2" fill="#fff"/><path d="M19 12l3-3v10l-3-3z" fill="#fff"/></svg></button>
    <button class="app" aria-label="Mail"><svg width="30" height="28"><path d="M0 9L15 0l15 9z" fill="#0a63b5"/><path d="M0 9h30v19H0z" fill="#2aa9ea"/><path d="M3 9h24L15 19z" fill="#f4f4f4"/><path d="M0 10l15 10L0 28z" fill="#3cc0f5"/><path d="M30 10L15 20l15 8z" fill="#1c8fe0"/></svg></button>
    <button class="app open" aria-label="File Explorer"><svg width="30" height="30"><use href="#folder"/></svg></button>
    <button class="app current" aria-label="Edge"><svg width="30" height="30" viewBox="0 0 30 30"><path d="M0 15Q1 0 16 0q13 1 14 12 0 8-8 8-6 0-5-4 2-2 0-5-7-7-17 4z" fill="url(#g-edge)"/><path d="M0 15q2-8 10-7 7 0 8 6-4-1-5 3 0 7 8 8 4 0 7-2-5 8-14 7Q1 28 0 15z" fill="#1684d8"/><path d="M9 15q-2 8 6 13 7 3 13-5-7 3-12-1-4-4-2-9-4 0-5 2z" fill="#0d4f96"/></svg></button>
    <button class="app" aria-label="Store"><svg width="30" height="30"><path d="M8 8V1.500h14V8" fill="none" stroke="#27a9f0" stroke-width="2"/><path d="M1 5h28v21q0 4-4 4H5q-4 0-4-4z" fill="#f1f1f1"/><path d="M10 12h5v5h-5z" fill="#f25022"/><path d="M16 12h5v5h-5z" fill="#7fba00"/><path d="M10 18h5v5h-5z" fill="#00a4ef"/><path d="M16 18h5v5h-5z" fill="#ffb900"/></svg></button>
    <button class="app" aria-label="Remote app"><svg width="30" height="30"><path d="M15 0l15 15-15 15L0 15z" fill="url(#g-dia)"/></svg></button>
    <button class="app" aria-label="Get help"><svg width="30" height="30"><use href="#help"/></svg><span class="mail-badge"><svg width="12" height="10"><path d="M.7.7h10.600v8.600H.7zM1 2l5 4 5-4" fill="none" stroke="#102838" stroke-width="1.300"/></svg></span></button>
    <button class="app open" aria-label="Settings"><svg width="30" height="30" viewBox="0 0 30 30"><path d="M11 1h8l1 4 3 1.500 4-1 3 7-3 2.500 3 3-3 7-4-1-3 1.500-1 4h-8l-1-4-3-1.500-4 1-3-7 3-3-3-2.500 3-7 4 1L10 5z" fill="#7c8a96"/><circle cx="15" cy="15" r="6" fill="#1b65b8" stroke="#eee" stroke-width="2"/></svg></button>
  </div>
  <div class="system">
    <div class="tray">
      <svg width="18" height="11"><use href="#chev"/></svg>
      <svg width="22" height="18"><use href="#cloud"/></svg>
      <svg width="20" height="16"><path d="M1 6q9-9 18 0" fill="none" stroke="#777" stroke-width="1.600"/><path d="M3.500 8.500q6.500-6 13 0M6.500 11q3.500-3 7 0" fill="none" stroke="#fff" stroke-width="1.700"/><circle cx="10" cy="13.500" r="1.900" fill="#fff"/></svg>
      <svg width="22" height="20"><use href="#speaker"/></svg>
      <svg width="21" height="14"><rect x="1" y="1" width="16" height="12" rx="3" fill="none" stroke="#fff" stroke-width="1.500"/><path d="M4 3.500h3v7H4zM18 5h2v4h-2z" fill="#fff"/></svg>
    </div>
    <p class="clock">12:11 AM<br>1/20/2023</p>
    <span class="count">2</span>
  </div>
</footer>
</body>
</html>
```
FILE: styles.css
```css
* { box-sizing: border-box; }
body {
  margin: 0;
  height: 100vh;
  display: flex;
  flex-direction: column;
  overflow: hidden;
  font-family: "Open Sans", "Noto Sans", sans-serif;
  font-size: 14px;
  color: #111;
  background: #fff;
}
.defs { position: absolute; }
svg { flex: none; }
p { margin: 0; }
button { margin: 0; padding: 0; border: 0; background: none; color: inherit; font: inherit; }
button svg { display: block; }
.slot { display: flex; align-items: center; justify-content: center; flex: none; align-self: stretch; }
.w33 { width: 33px; }
.w42 { width: 42px; }
.w44 { width: 44px; }
.w48 { width: 48px; }
.w49 { width: 49px; }
.w54 { width: 54px; }
.w56 { width: 56px; }
.w58 { width: 58px; }

/* browser tab strip */
.tabstrip { display: flex; height: 40px; flex: none; padding-left: 1px; background: #cdcdcd; }
.browser-tab {
  display: flex;
  align-items: center;
  width: 300px;
  padding: 0 14px;
  background: #f7f7f7;
  border-radius: 8px 8px 0 0;
}
.favicon {
  width: 20px;
  height: 20px;
  background: #fff;
  font: bold 11px/16px "Liberation Sans", sans-serif;
  text-align: center;
}
.favicon b { color: #c22; }
.favicon i { display: block; height: 1px; background: #444; }
.audio { margin-left: 12px; }
.tab-title {
  flex: 1;
  margin-left: 11px;
  white-space: nowrap;
  font-size: 14px;
  mask-image: linear-gradient(90deg, #000 80%, transparent 97%);
}
.window-buttons { display: flex; height: 38px; margin-left: auto; }

/* browser toolbar */
.toolbar {
  display: flex;
  align-items: center;
  height: 49px;
  flex: none;
  padding: 0 5px 1px 8px;
  background: #f7f7f7;
  border-bottom: 1px solid #b8b8b8;
}
.address {
  display: flex;
  align-items: center;
  flex: 1;
  height: 38px;
  margin: 0 5px 0 7px;
  padding: 0 9px 0 23px;
  border-radius: 19px;
  background: #fff;
  box-shadow: 0 0 3px #ddd;
}
.address input {
  flex: 1;
  min-width: 0;
  margin-left: 20px;
  padding: 0;
  border: 0;
  outline: 0;
  font: 16px "Open Sans", "Noto Sans", sans-serif;
  color: transparent;
  background: linear-gradient(90deg, #707070 54px, #000 54px 210px, #707070 210px);
  background-clip: text;
}
.extensions { margin-right: 2px; }
.tool-sep { width: 2px; height: 20px; background: #ccc; }

.middle { display: flex; flex: 1; min-height: 0; }
.page { display: flex; flex-direction: column; flex: 1; min-width: 0; }

/* course header */
.course-bar {
  display: flex;
  height: 89px;
  flex: none;
  background: #3d3d3d;
  color: #fff;
  font-family: "Liberation Sans", Arial, sans-serif;
}
.course-bar-left {
  display: flex;
  align-items: center;
  justify-content: space-between;
  width: 438px;
  padding: 0 19px 0 17px;
  border-right: 1px solid #cfd8dc;
}
.course-nav { display: flex; flex: 1; align-items: center; justify-content: flex-end; gap: 10px; padding-right: 29px; }
.btn {
  display: flex;
  align-items: center;
  height: 55px;
  padding: 0 20px;
  border: 1px solid #fff;
  border-radius: 6px;
  font-size: 20px;
  font-weight: bold;
}
.prev { gap: 17px; padding-left: 30px; }
.next { gap: 18px; padding-right: 31px; background: #cc3333; }

.cols { display: flex; flex: 1; min-height: 0; }

/* lecture list */
.sidebar {
  position: relative;
  display: flex;
  flex-direction: column;
  width: 438px;
  flex: none;
  border-right: 1px solid #cfd8dc;
  font-family: "Liberation Sans", Arial, sans-serif;
}
.progress {
  position: absolute;
  top: 0;
  left: 0;
  right: 0;
  z-index: 1;
  height: 58px;
  border-bottom: 1px solid #d4d6d8;
  background: rgba(240, 240, 240, .95);
  font-size: 17px;
  font-weight: bold;
  line-height: 52px;
  text-align: center;
  color: #222;
}
.progress b { font-size: 24px; }
.sidebar-scroll { display: flex; flex: 1; min-height: 0; }
.lectures { flex: 1; min-width: 0; padding-top: 18px; overflow: hidden; border-right: 1px solid #fff; }
.row {
  display: flex;
  min-height: 66px;
  border-bottom: 1px solid #f9e4e4;
  background: #fafafa;
  color: #565656;
  font-size: 18px;
  line-height: 28px;
  text-decoration: none;
}
.mark { display: flex; align-items: center; justify-content: center; width: 66px; flex: none; border-right: 1px solid #fff; }
.mark i { width: 25px; height: 25px; border: 2px solid #cc3333; border-radius: 50%; }
.mark .done { border: 0; background: #cc3333; }
.label { align-self: center; padding: 12px 0 12px 13px; white-space: nowrap; }
.label svg { width: 28px; height: 24px; margin: 3px 16px 3px 1px; vertical-align: -9px; }
.lectures h2 {
  margin: 0;
  padding: 41px 20px 16px;
  border-bottom: 1px solid #f9e4e4;
  font-size: 20px;
  line-height: 24px;
  color: #1c1d36;
}

/* scroll bars */
.vbar { display: flex; flex-direction: column; align-items: center; flex: none; width: 21px; background: #f0f0f0; }
.vbar .thumb { width: 17px; background: #c1c1c1; }
.side .thumb { height: 69px; margin-top: 297px; }
.page-scroll .thumb { height: 216px; margin-top: 38px; }
.arrow { width: 0; height: 0; border: 5px solid transparent; }
.up { margin-top: 5px; border-bottom-color: #505050; }
.down { margin: auto 0 4px; border-top-color: #505050; }
.pale { border-bottom-color: #ddd; }
.left { border-right-color: #a3a3a3; }
.right { border-left-color: #a3a3a3; }
.hbar { display: flex; height: 21px; flex: none; background: #f0f0f0; }
.page > .hbar { height: 20px; }
.track { display: flex; flex: 1; align-items: center; justify-content: space-between; padding: 0 4px; }
.corner { width: 21px; background: #dcdcdc; }

/* lecture content */
.content {
  flex: 1;
  min-width: 0;
  overflow: hidden;
  padding: 32px 48px 0 50px;
  background: linear-gradient(90deg, #f5f5f5, #fff 20px);
}
.video {
  display: flex;
  flex-direction: column;
  aspect-ratio: 1304 / 733;
  border-right: 1px solid #000;
  background: #fff;
}
.big-button { display: block; width: 302px; height: 60px; margin: 41px auto 0; border-radius: 6px; background: #cc3333; }

.v-tabs { display: flex; height: 34px; flex: none; padding-left: 10px; background: #dfe1e5; font-size: 13px; color: #666; }
.v-tab { display: flex; align-items: center; width: 60px; padding-left: 7px; flex: none; }
.v-tab svg { width: 16px; height: 16px; }
.v-tab em {
  width: 28px;
  height: 20px;
  margin-left: 8px;
  border-right: 5px solid #dfe1e5;
  box-shadow: 1px 0 #999;
  overflow: hidden;
  font-style: normal;
  line-height: 20px;
  white-space: nowrap;
}
.last em { box-shadow: none; }
.v-tab.active { background: #fff; border-radius: 8px 8px 0 0; }
.v-tab .close { width: 10px; height: 10px; margin-left: 15px; }
.v-window { display: flex; justify-content: space-between; width: 152px; height: 30px; align-items: center; margin: 0 17px 0 auto; }

.v-toolbar { display: flex; align-items: center; height: 39px; flex: none; padding: 0 6px 0 5px; border-bottom: 2px solid #e6e6ea; }
.v-omnibox {
  display: flex;
  align-items: center;
  flex: 1;
  height: 30px;
  margin: 0 7px 0 8px;
  padding-left: 9px;
  border-radius: 15px;
  background: #f2f3f6;
  color: #333;
}
.v-file { margin-left: 11px; padding-right: 9px; border-right: 1px solid #999; line-height: 16px; color: #666; font-size: 13px; }
.v-url { flex: 1; margin-left: 9px; white-space: nowrap; font-size: 13px; }

.v-page { position: relative; flex: 1; padding: 17px; }
.v-page p { font: 32px/36px "Liberation Serif", "Times New Roman", serif; color: #000; }
.cursor { position: absolute; left: 64%; top: 15%; }

.v-taskbar { display: flex; align-items: center; height: 41px; flex: none; background: #262626; color: #ddd; font-size: 13px; }
.v-search {
  display: flex;
  align-items: center;
  width: 350px;
  height: 100%;
  padding: 0 3px 0 12px;
  border: 1px solid #bbb;
  background: #f2f2f2;
}
.v-search input { flex: 1; min-width: 0; margin-left: 10px; padding: 0; border: 0; outline: 0; background: none; font: 15px "Open Sans", "Noto Sans", sans-serif; }
.v-search input::placeholder { color: #444; opacity: 1; }
.v-search + .w48 { margin-right: 4px; }
.v-app { display: flex; align-items: center; justify-content: center; width: 43px; height: 100%; flex: none; }
.v-app.run { background: linear-gradient(#76a9d8, #76a9d8) center bottom / 34px 2px no-repeat; }
.v-app.current { background: #4d4d4d; border-bottom: 2px solid #76a9d8; }
.v-weather { display: flex; align-items: center; gap: 6px; margin-left: auto; }
.v-tray { display: flex; align-items: center; margin-left: 22px; gap: 16px; }
.v-lang { width: 46px; margin-left: 8px; text-align: center; font-size: 12px; }
.v-clock { width: 72px; text-align: center; font-size: 12px; line-height: 19px; white-space: nowrap; }
.v-desk { width: 6px; height: 100%; margin-left: 3px; border-left: 1px solid #888; }

/* browser side bar */
.edge-bar {
  display: flex;
  flex-direction: column;
  align-items: center;
  width: 59px;
  flex: none;
  padding-bottom: 2px;
  border-left: 1px solid #b8b8b8;
  background: #f7f7f7;
}
.edge-bar button { display: flex; align-items: center; justify-content: center; width: 54px; height: 53px; }
.edge-bar .add { height: 60px; }
.edge-bar hr { width: 35px; margin: auto 0 2px; border: 0; border-top: 1px solid #bbb; }

/* system task bar */
.taskbar { display: flex; align-items: center; height: 60px; flex: none; border-top: 1px solid #444; background: #202020; color: #fff; font-size: 14px; line-height: 20px; }
.weather { display: flex; flex: 1 1 0; align-items: center; gap: 8px; padding: 0 0 3px 24px; font-size: 15px; }
.weather span { color: #bbb; }
.apps { display: flex; align-items: center; height: 100%; }
.search-pill {
  display: flex;
  align-items: center;
  justify-content: center;
  gap: 6px;
  width: 125px;
  height: 40px;
  margin: 0 5px 0 3px;
  border: 1px solid #333;
  border-radius: 20px;
  background: #2d2d2d;
}
.app { position: relative; display: flex; align-items: center; justify-content: center; width: 55px; height: 50px; }
.app.current { border: 1px solid #383838; border-radius: 6px; background: #2e2e2e; }
.app.open::after, .app.current::after { content: ""; position: absolute; bottom: 1px; width: 8px; height: 4px; border-radius: 2px; background: #999; }
.app.current::after { bottom: 0; width: 20px; background: #4cc2ff; }
.mail-badge { position: absolute; top: 3px; right: 5px; display: flex; align-items: center; justify-content: center; width: 20px; height: 20px; border-radius: 50%; background: #4cc2ff; }
.system { display: flex; flex: 1 1 0; align-items: center; justify-content: flex-end; padding: 0 24px 2px 0; }
.tray { display: flex; align-items: center; gap: 11px; }
.clock { width: 83px; text-align: right; white-space: nowrap; }
.count { width: 20px; height: 20px; margin-left: 15px; border-radius: 50%; background: #4cc2ff; color: #111; font-size: 12px; text-align: center; }
```
